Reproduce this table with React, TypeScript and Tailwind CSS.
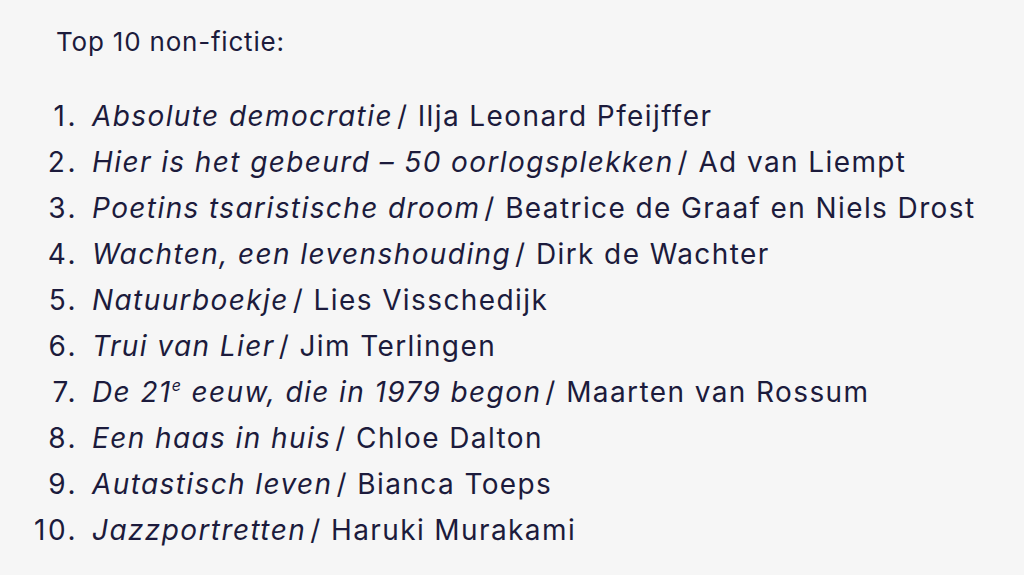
const items: { title: React.ReactNode; author: string }[] = [
  { title: 'Absolute democratie', author: 'Ilja Leonard Pfeijffer' },
  { title: 'Hier is het gebeurd – 50 oorlogsplekken', author: 'Ad van Liempt' },
  { title: 'Poetins tsaristische droom', author: 'Beatrice de Graaf en Niels Drost' },
  { title: 'Wachten, een levenshouding', author: 'Dirk de Wachter' },
  { title: 'Natuurboekje', author: 'Lies Visschedijk' },
  { title: 'Trui van Lier', author: 'Jim Terlingen' },
  {
    title: (
      <>
        De 21<sup className="text-[16px] relative -top-[11px]">e</sup> eeuw, die in 1979 begon
      </>
    ),
    author: 'Maarten van Rossum',
  },
  { title: 'Een haas in huis', author: 'Chloe Dalton' },
  { title: 'Autastisch leven', author: 'Bianca Toeps' },
  { title: 'Jazzportretten', author: 'Haruki Murakami' },
];

export default function App() {
  return (
    <div className="min-h-[575px] w-[1024px] bg-[#f6f6f6] text-[#1c1b3c] font-['Inter','Open_Sans',sans-serif]">
      <div className="pt-[19px] pl-[56px] text-[26px] leading-[46px] tracking-[0.8px]">Top 10 non-fictie:</div>
      <ol className="mt-[28px] text-[28px] leading-[46px] tracking-[1.4px]">
        {items.map((it, i) => (
          <li key={i} className="flex">
            <span className="w-[78px] shrink-0 text-right tracking-[2.5px]">{i + 1}.</span>
            <span className="pl-[14px] whitespace-nowrap">
              <em className="italic">{it.title}</em>
              <span className="ml-[4px]">/</span> {it.author}
            </span>
          </li>
        ))}
      </ol>
    </div>
  );
}
